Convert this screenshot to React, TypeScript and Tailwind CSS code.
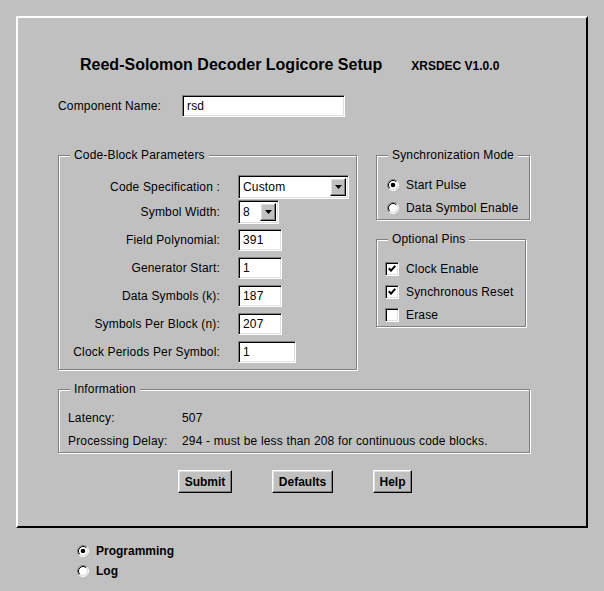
import type { ReactNode } from "react";

const sunken =
  "border border-t-[#808080] border-l-[#808080] border-b-white border-r-white shadow-[inset_1px_1px_0_#000,inset_-1px_-1px_0_#dfdfdf]";
const raised =
  "border border-t-white border-l-white border-b-black border-r-black shadow-[inset_-1px_-1px_0_#808080,inset_1px_1px_0_#dfdfdf]";

function GroupBox({
  title,
  className,
  children,
}: {
  title: string;
  className: string;
  children: ReactNode;
}) {
  return (
    <div
      className={`relative border border-[#808080] shadow-[inset_1px_1px_0_#fff,1px_1px_0_#fff] ${className}`}
    >
      <span className="absolute top-[-8px] left-[11px] bg-[#c0c0c0] px-[4px] leading-[14px]">
        {title}
      </span>
      {children}
    </div>
  );
}

function TextBox({ value, width }: { value: string; width: string }) {
  return (
    <div
      className={`flex h-[22px] items-center bg-white pl-[4px] ${sunken} ${width}`}
    >
      {value}
    </div>
  );
}

function DropDown({ value, width }: { value: string; width: string }) {
  return (
    <div className={`flex h-[24px] items-stretch bg-white p-[2px] ${sunken} ${width}`}>
      <span className="flex flex-1 items-center pl-[2px]">{value}</span>
      <span className={`flex w-[16px] items-center justify-center bg-[#c0c0c0] ${raised}`}>
        <svg width="7" height="4" viewBox="0 0 7 4">
          <path d="M0 0H7L3.5 4Z" fill="#000" />
        </svg>
      </span>
    </div>
  );
}

function Radio({ checked }: { checked: boolean }) {
  return (
    <svg width="12" height="12" viewBox="0 0 12 12" className="shrink-0">
      <circle cx="6" cy="6" r="4.5" fill="#fff" />
      <path d="M9.89 2.11A5.5 5.5 0 0 0 2.11 9.89" fill="none" stroke="#808080" />
      <path d="M9.18 2.82A4.5 4.5 0 0 0 2.82 9.18" fill="none" stroke="#000" />
      <path d="M9.89 2.11A5.5 5.5 0 0 1 2.11 9.89" fill="none" stroke="#fff" />
      <path d="M9.18 2.82A4.5 4.5 0 0 1 2.82 9.18" fill="none" stroke="#dfdfdf" />
      {checked ? <circle cx="6" cy="6" r="2.3" fill="#000" /> : null}
    </svg>
  );
}

function CheckBox({ checked }: { checked: boolean }) {
  return (
    <span className={`flex h-[14px] w-[14px] shrink-0 items-center justify-center bg-white ${sunken}`}>
      {checked ? (
        <svg width="8" height="7" viewBox="0 0 8 7">
          <path d="M0.8 3.2L3 5.6L7.2 0.8" fill="none" stroke="#000" strokeWidth="2" />
        </svg>
      ) : null}
    </span>
  );
}

function ParamRow({
  label,
  className,
  children,
}: {
  label: string;
  className: string;
  children: ReactNode;
}) {
  return (
    <div className={`flex items-center ${className}`}>
      <span className="w-[158px] text-right">{label}</span>
      <div className="ml-[18px]">{children}</div>
    </div>
  );
}

export default function App() {
  return (
    <div className="min-h-screen w-[604px] bg-[#c0c0c0] pt-4 font-['Liberation_Sans',Arial,sans-serif] text-[12px] leading-[14px] tracking-[0.16px] text-black">
      <div className="ml-4 h-[512px] w-[572px] border-2 border-t-white border-l-white border-b-black border-r-black">
        <div className="mt-[37px] flex items-baseline gap-[29px] pl-[62px] tracking-normal">
          <h1 className="text-[16px] leading-[20px] font-bold">
            Reed-Solomon Decoder Logicore Setup
          </h1>
          <span className="font-bold">XRSDEC V1.0.0</span>
        </div>

        <div className="mt-[20px] flex items-center pl-[40px]">
          <span className="w-[124px]">Component Name:</span>
          <TextBox value="rsd" width="w-[163px]" />
        </div>

        <div className="mt-[38px] flex items-start pl-[40px]">
          <GroupBox title="Code-Block Parameters" className="w-[299px] pt-[19px] pb-[6px] pl-[3px]">
            <ParamRow label="Code Specification :" className="h-[23px]">
              <DropDown value="Custom" width="w-[111px]" />
            </ParamRow>
            <ParamRow label="Symbol Width:" className="mt-[2px] h-[23px]">
              <DropDown value="8" width="w-[41px]" />
            </ParamRow>
            <ParamRow label="Field Polynomial:" className="mt-[6px]">
              <TextBox value="391" width="w-[44px]" />
            </ParamRow>
            <ParamRow label="Generator Start:" className="mt-[6px]">
              <TextBox value="1" width="w-[44px]" />
            </ParamRow>
            <ParamRow label="Data Symbols (k):" className="mt-[6px]">
              <TextBox value="187" width="w-[44px]" />
            </ParamRow>
            <ParamRow label="Symbols Per Block (n):" className="mt-[6px]">
              <TextBox value="207" width="w-[44px]" />
            </ParamRow>
            <ParamRow label="Clock Periods Per Symbol:" className="mt-[6px]">
              <TextBox value="1" width="w-[58px]" />
            </ParamRow>
          </GroupBox>

          <div className="ml-[19px] flex flex-col">
            <GroupBox title="Synchronization Mode" className="w-[154px] pt-[17px] pl-[10px]">
              <div className="flex h-[23px] items-center gap-[7px]">
                <Radio checked />
                <span>Start Pulse</span>
              </div>
              <div className="flex h-[23px] items-center gap-[7px]">
                <Radio checked={false} />
                <span>Data Symbol Enable</span>
              </div>
            </GroupBox>

            <GroupBox title="Optional Pins" className="mt-[19px] w-[150px] pt-[17px] pl-[8px]">
              {[
                { label: "Clock Enable", checked: true },
                { label: "Synchronous Reset", checked: true },
                { label: "Erase", checked: false },
              ].map((pin) => (
                <div key={pin.label} className="flex h-[23px] items-center gap-[7px]">
                  <CheckBox checked={pin.checked} />
                  <span>{pin.label}</span>
                </div>
              ))}
            </GroupBox>
          </div>
        </div>

        <div className="mt-[19px] pl-[40px]">
          <GroupBox title="Information" className="w-[472px] pt-[16px] pl-[9px]">
            <div className="flex h-[23px] items-center">
              <span className="w-[114px]">Latency:</span>
              <span>507</span>
            </div>
            <div className="flex h-[23px] items-center">
              <span className="w-[114px]">Processing Delay:</span>
              <span>294 - must be less than 208 for continuous code blocks.</span>
            </div>
          </GroupBox>
        </div>

        <div className="mt-[17px] flex gap-[40px] pl-[160px]">
          {[
            { label: "Submit", width: "w-[54px]" },
            { label: "Defaults", width: "w-[61px]" },
            { label: "Help", width: "w-[39px]" },
          ].map((button) => (
            <button
              key={button.label}
              type="button"
              className={`h-[23px] bg-[#c0c0c0] font-bold tracking-normal ${raised} ${button.width}`}
            >
              {button.label}
            </button>
          ))}
        </div>
      </div>

      <div className="mt-[13px] ml-[77px] font-bold tracking-normal">
        <div className="flex h-[20px] items-center gap-[7px]">
          <Radio checked />
          <span>Programming</span>
        </div>
        <div className="flex h-[20px] items-center gap-[7px]">
          <Radio checked={false} />
          <span>Log</span>
        </div>
      </div>
    </div>
  );
}
